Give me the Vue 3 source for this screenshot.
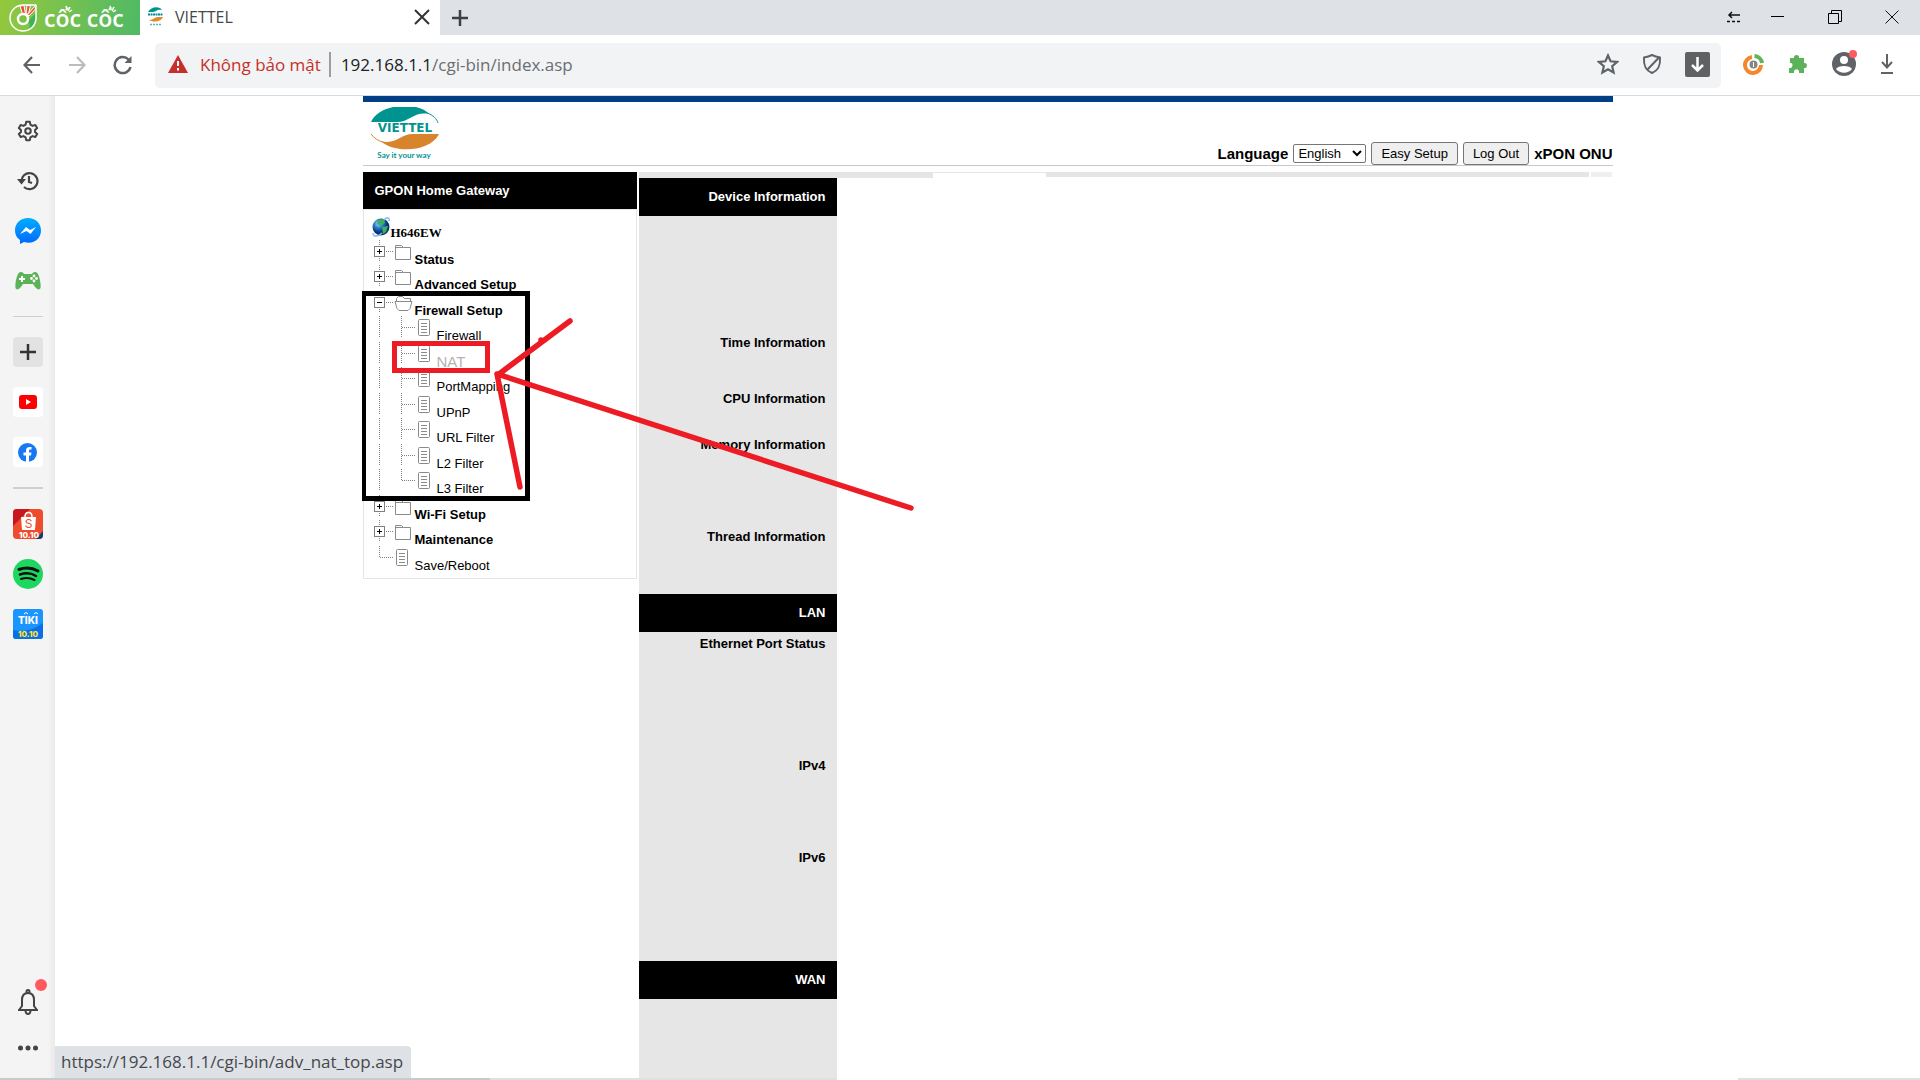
<script setup>
import { ref } from 'vue'

const language = ref('English')

const treeNodes = [
  { label: 'Status', type: 'folder', toggle: 'plus' },
  { label: 'Advanced Setup', type: 'folder', toggle: 'plus' },
  { label: 'Firewall Setup', type: 'open', toggle: 'minus' },
  { label: 'Firewall', type: 'page', child: true },
  { label: 'NAT', type: 'page', child: true, active: true },
  { label: 'PortMapping', type: 'page', child: true },
  { label: 'UPnP', type: 'page', child: true },
  { label: 'URL Filter', type: 'page', child: true },
  { label: 'L2 Filter', type: 'page', child: true },
  { label: 'L3 Filter', type: 'page', child: true, last: true },
  { label: 'Wi-Fi Setup', type: 'folder', toggle: 'plus' },
  { label: 'Maintenance', type: 'folder', toggle: 'plus' },
  { label: 'Save/Reboot', type: 'page', last: true }
]

const infoRows = [
  { label: 'Device Information', head: true },
  { label: '', height: 115 },
  { label: 'Time Information', height: 56 },
  { label: 'CPU Information', height: 46 },
  { label: 'Memory Information', height: 92 },
  { label: 'Thread Information', height: 69 },
  { label: 'LAN', head: true },
  { label: 'Ethernet Port Status', height: 122 },
  { label: 'IPv4', height: 92 },
  { label: 'IPv6', height: 115 },
  { label: 'WAN', head: true },
  { label: '', height: 115 }
]
</script>

<template>
  <div class="browser">
    <!-- Tab strip -->
    <header class="tab-strip">
      <button class="brand" aria-label="Cốc Cốc">
        <svg width="30" height="30" viewBox="0 0 30 30" fill="none">
          <path d="M27 3V15C27 21 24 26 18 28C22 24 21 20 19 18L27 10Z" fill="#3fb257" />
          <path d="M27 2H14A13 13 0 1 0 27 15Z" stroke="#fff" stroke-width="1.500" stroke-linejoin="round" />
          <path d="M11 3L15 2.500L16.500 11L13.500 11Z M18 2.500L21.500 2.500L19.500 11L17 11Z M26 3L26.500 6L20 13L18.500 11.500Z" fill="#f04e37" stroke="#fff" />
          <circle cx="14" cy="16" r="5" fill="#7bc143" stroke="#fff" stroke-width="2.500" />
        </svg>
        <span class="brand-name">cốc cốc</span>
        <svg class="brand-rays" width="80" height="8" viewBox="0 0 80 8" stroke="#fff" stroke-width="1.500">
          <path d="M23 1L24 5M27 2L25 6M29 5L26 7M67 1L68 5M71 2L69 6M73 5L70 7" />
        </svg>
      </button>
      <div class="tab">
        <svg width="17" height="20" viewBox="0 0 17 20">
          <path d="M1 5C4 -1 13 -1 15 3C9 2 10 5 6 5Z" fill="#009490" />
          <path d="M16 10C13 16 5 15 2 13C7 13 7 10 11 10Z" fill="#e08a2d" />
          <path d="M1 7.500H16" stroke="#008c9c" stroke-width="2" stroke-dasharray="2 .5" />
          <path d="M3 17.500H14" stroke="#5fb5b5" stroke-width="1.500" stroke-dasharray="2 1" />
        </svg>
        <span class="tab-title">VIETTEL</span>
        <button class="icon-btn" aria-label="Close tab">
          <svg width="16" height="16" viewBox="0 0 16 16" stroke="#333" stroke-width="2"><path d="M1 1L15 15M15 1L1 15" /></svg>
        </button>
      </div>
      <button class="icon-btn new-tab" aria-label="New tab">
        <svg width="16" height="16" viewBox="0 0 16 16" stroke="#3c4043" stroke-width="2.500"><path d="M8 0V16M0 8H16" /></svg>
      </button>
      <div class="window-buttons">
        <button class="icon-btn" aria-label="Compact">
          <svg width="14" height="12" viewBox="0 0 14 12" fill="none" stroke="#111" stroke-width="1.500">
            <path d="M2 4H13M5 1L2 4L5 7" /><path d="M0 10.500H13" stroke-dasharray="3 2" />
          </svg>
        </button>
        <button class="icon-btn" aria-label="Minimize">
          <svg width="14" height="14" viewBox="0 0 14 14"><rect y="6" width="13" height="1" /></svg>
        </button>
        <button class="icon-btn" aria-label="Restore">
          <svg width="14" height="14" viewBox="0 0 14 14" fill="none" stroke="#000"><path d="M.5 3.500H10.500V13.500H.5ZM3.500 3V.5H13.500V11.500H11" /></svg>
        </button>
        <button class="icon-btn" aria-label="Close">
          <svg width="14" height="14" viewBox="0 0 14 14" stroke="#111"><path d="M.5 .5L13.500 13.500M13.500 .5L.5 13.500" /></svg>
        </button>
      </div>
    </header>

    <!-- Toolbar -->
    <nav class="toolbar">
      <div class="nav-buttons">
        <button class="icon-btn" aria-label="Back">
          <svg width="18" height="18" viewBox="0 0 18 18" fill="none" stroke="#5f6368" stroke-width="2.200"><path d="M17 9H2M9 1L1.500 9L9 17" /></svg>
        </button>
        <button class="icon-btn" aria-label="Forward">
          <svg width="18" height="18" viewBox="0 0 18 18" fill="none" stroke="#babcbe" stroke-width="2.200"><path d="M1 9H16M9 1L16.500 9L9 17" /></svg>
        </button>
        <button class="icon-btn" aria-label="Reload">
          <svg width="20" height="20" viewBox="0 0 20 20" fill="none" stroke="#5f6368" stroke-width="2.500">
            <path d="M17.500 12A8 8 0 1 1 15.500 4.500L17 6" /><path d="M18.500 1V8H11.500Z" fill="#5f6368" stroke="none" />
          </svg>
        </button>
      </div>
      <div class="omnibox">
        <svg width="20" height="18" viewBox="0 0 20 18"><path d="M10 0L20 18H0Z" fill="#c5302a" /><path d="M10 6V11M10 13V15.500" stroke="#fff" stroke-width="2" /></svg>
        <span class="insecure">Không bảo mật</span>
        <span class="divider"></span>
        <span class="url">192.168.1.1<span class="path">/cgi-bin/index.asp</span></span>
        <div class="omni-icons">
          <button class="icon-btn" aria-label="Bookmark">
            <svg width="22" height="22" viewBox="0 0 22 22" fill="none" stroke="#5f6368" stroke-width="2.200"><path d="M11 2.500L13.600 8.300L20 9L15.200 13.200L16.600 19.500L11 16.200L5.400 19.500L6.800 13.200L2 9L8.400 8.300Z" /></svg>
          </button>
          <button class="icon-btn" aria-label="Protection">
            <svg width="20" height="22" viewBox="0 0 20 22" fill="none" stroke="#5f6368" stroke-width="2"><path d="M10 2C13 3.500 15 4 18 4.500C18.500 12 17 17 10 20C3 17 1.500 12 2 4.500C5 4 7 3.500 10 2ZM5 17L16.500 5" /></svg>
          </button>
          <button class="icon-btn" aria-label="Save media">
            <svg width="25" height="25" viewBox="0 0 25 25" fill="none"><rect width="25" height="25" rx="2" fill="#606163" /><path d="M12.500 5V18M7 13L12.500 18.500L18 13" stroke="#fff" stroke-width="2.500" /></svg>
          </button>
        </div>
      </div>
      <div class="extensions">
        <button class="icon-btn" aria-label="Savings">
          <svg width="21" height="21" viewBox="0 0 21 21" fill="none">
            <path d="M9 3A8 8 0 1 0 18 11" stroke="#f5862a" stroke-width="4" /><path d="M11.500 2A8 8 0 0 1 19 9" stroke="#5fb35a" stroke-width="4" />
            <circle cx="10.500" cy="10.500" r="4" fill="#858585" /><path d="M10.500 8V13" stroke="#fff" />
          </svg>
        </button>
        <button class="icon-btn" aria-label="Extensions">
          <svg width="20" height="20" viewBox="0 0 20 20" fill="#5cb25a"><path d="M2 4H6C5 0 12 0 11 4H16V9C20 8 20 15 16 14V19H11C12 14 5 14 6 19H1V14C5 15 6 8 2 9Z" /></svg>
        </button>
        <button class="icon-btn" aria-label="Profile">
          <svg width="24" height="24" viewBox="0 0 24 24"><circle cx="12" cy="12" r="12" fill="#5f6368" /><circle cx="12" cy="8" r="4" fill="#fff" /><path d="M4 17C6 13 18 13 20 17C16 22 8 22 4 17Z" fill="#fff" /></svg>
          <span class="dot"></span>
        </button>
        <button class="icon-btn" aria-label="Downloads">
          <svg width="14" height="20" viewBox="0 0 14 20" fill="none" stroke="#5f6368" stroke-width="2"><path d="M7 0V13M2 8L7 13.500L12 8M1 19H13" /></svg>
        </button>
      </div>
    </nav>

    <div class="body">
      <!-- Browser sidebar -->
      <aside class="sidebar">
        <button class="side-btn" aria-label="Settings">
          <svg width="22" height="22" viewBox="0 0 24 24" fill="none" stroke="#444" stroke-width="2.200" stroke-linejoin="round">
            <path d="M10 2H14L14.600 5L17 6.400L20 5.400L22 8.800L19.700 10.800V13.200L22 15.200L20 18.600L17 17.600L14.600 19L14 22H10L9.400 19L7 17.600L4 18.600L2 15.200L4.300 13.200V10.800L2 8.800L4 5.400L7 6.400L9.400 5Z" /><circle cx="12" cy="12" r="3" />
          </svg>
        </button>
        <button class="side-btn" aria-label="History">
          <svg width="22" height="20" viewBox="0 0 22 20" fill="none" stroke="#444" stroke-width="2.200"><path d="M4.500 11A8 8 0 1 1 7 16M12 5V11L15 12" /><path d="M0 8H9L4.500 13.500Z" fill="#444" stroke="none" /></svg>
        </button>
        <button class="side-btn" aria-label="Messenger">
          <svg width="26" height="26" viewBox="0 0 26 26">
            <defs><linearGradient id="msg" x2="0" y2="1"><stop stop-color="#00aeff" /><stop offset="1" stop-color="#0068ff" /></linearGradient></defs>
            <path d="M13 0C5.500 0 0 5 0 12.500C0 17 2 20 5 22V26L9 24C18 27 26 21 26 12.500C26 5 20.500 0 13 0Z" fill="url(#msg)" />
            <path d="M5 16L11 9L15 12L21 9L15.500 16L11.500 13Z" fill="#fff" />
          </svg>
        </button>
        <button class="side-btn" aria-label="Games">
          <svg width="26" height="18" viewBox="0 0 26 18"><path d="M3 2C5 -1 8 0 9 2H17C18 0 21 -1 23 2C25 6 26 12 25.500 16C24 19 21 17 18 12H8C5 17 2 19 .5 16C0 12 1 6 3 2Z" fill="#5cb256" /><path d="M4 7H10M7 4V10" stroke="#fff" stroke-width="2" /><g fill="#fff"><circle cx="19" cy="4" r="1.400" /><circle cx="19" cy="9" r="1.400" /><circle cx="16.500" cy="6.500" r="1.400" /><circle cx="21.500" cy="6.500" r="1.400" /></g></svg>
        </button>
        <hr class="side-line" />
        <button class="side-btn tile grey" aria-label="Add">
          <svg width="16" height="16" viewBox="0 0 16 16" stroke="#333" stroke-width="2.500"><path d="M8 0V16M0 8H16" /></svg>
        </button>
        <button class="side-btn tile" aria-label="YouTube">
          <svg width="18" height="14" viewBox="0 0 18 14"><rect width="18" height="14" rx="3" fill="#f00" /><path d="M7 4L12 7L7 10Z" fill="#fff" /></svg>
        </button>
        <button class="side-btn tile" aria-label="Facebook">
          <svg width="19" height="19" viewBox="0 0 19 19"><circle cx="9.500" cy="9.500" r="9.500" fill="#1877f2" /><path d="M8 19V12.500H5.500V9.500H8V7.500C8 4.500 10 3.500 13.500 4V6.500C11.500 6.500 11 6.800 11 8V9.500H13.500L13 12.500H11V19Z" fill="#fff" /></svg>
        </button>
        <hr class="side-line thick" />
        <button class="side-btn" aria-label="Shopee">
          <svg width="30" height="30" viewBox="0 0 30 30">
            <rect width="30" height="30" rx="4" fill="#ee4d2d" /><path d="M4 0H17L0 17V4Q0 0 4 0Z" fill="#c9151e" /><path d="M30 22V26Q30 30 26 30H23Z" fill="#173a7a" />
            <path d="M8 8H23L22 21H9Z" fill="#fff" /><path d="M12 8C12 2 19 2 19 8" fill="none" stroke="#fff" stroke-width="1.500" />
            <text x="15.500" y="19" class="badge-text" font-size="12" fill="#ee4d2d">S</text>
            <text x="16" y="29" class="badge-text heavy" font-size="8" fill="#fff">10.10</text>
          </svg>
        </button>
        <button class="side-btn" aria-label="Spotify">
          <svg width="30" height="30" viewBox="0 0 30 30" fill="none" stroke="#111" stroke-linecap="round"><circle cx="15" cy="15" r="15" fill="#1ed760" stroke="none" /><path d="M6 10.500Q16 7 25 12" stroke-width="3" /><path d="M7 15.500Q16 12.500 23 17" stroke-width="2.500" /><path d="M8 20Q15 17.500 21.500 21" stroke-width="2" /></svg>
        </button>
        <button class="side-btn" aria-label="Tiki">
          <svg width="30" height="30" viewBox="0 0 30 30">
            <rect width="30" height="30" rx="3" fill="#1a94ff" /><path d="M0 21Q15 25 30 14V27Q30 30 27 30H3Q0 30 0 27Z" fill="#0b6fe8" />
            <path d="M11 5Q13 2 15 5M21 5Q23 2 25 5" fill="none" stroke="#fff" />
            <text x="15" y="15" class="badge-text heavy" font-size="10" fill="#fff">TIKI</text>
            <text x="15" y="28" class="badge-text heavy" font-size="8" fill="#ffe926">10.10</text>
          </svg>
        </button>
        <div class="side-bottom">
          <button class="side-btn bell" aria-label="Notifications">
            <svg width="20" height="26" viewBox="0 0 20 26" fill="none" stroke="#444" stroke-width="2"><path d="M1 21H19L16 17V11C16 7 14 4 10 4C6 4 4 7 4 11V17ZM7.500 22C8 26 12 26 12.500 22" /><circle cx="10" cy="2.500" r="1.500" /></svg>
            <span class="dot"></span>
          </button>
          <button class="side-btn" aria-label="More">
            <svg width="20" height="6" viewBox="0 0 20 6" fill="#444"><circle cx="2.500" cy="3" r="2.500" /><circle cx="10" cy="3" r="2.500" /><circle cx="17.500" cy="3" r="2.500" /></svg>
          </button>
        </div>
      </aside>

      <!-- Router page -->
      <main class="page">
        <div class="gateway">
          <div class="gw-header">
            <svg width="70" height="58" viewBox="0 0 70 58">
              <path d="M1 15C10 -5 50 -5 59 7C44 4 40 15 27 15Z" fill="#009490" />
              <path d="M69 27C60 46 22 46 11 34C26 38 30 27 43 27Z" fill="#d8842c" />
              <path d="M57 6C63 8 67 12 68 16" fill="none" stroke="#009490" />
              <path d="M1 27C4 31 8 34 13 35" fill="none" stroke="#d8842c" />
              <text x="35" y="25" class="logo-name">VIETTEL</text>
              <text x="34" y="51" class="logo-tag">Say it your way</text>
            </svg>
            <div class="gw-controls">
              <label for="lang">Language</label>
              <select id="lang" v-model="language">
                <option>English</option>
              </select>
              <button class="gw-btn">Easy Setup</button>
              <button class="gw-btn">Log Out</button>
              <strong>xPON ONU</strong>
            </div>
          </div>

          <div class="gw-main">
            <section class="menu">
              <h1 class="menu-title">GPON Home Gateway</h1>
              <div class="menu-body">
                <div class="root">
                  <svg width="19" height="20" viewBox="0 0 19 20">
                    <defs><radialGradient id="globe" cx=".35" cy=".3"><stop stop-color="#a9dcff" /><stop offset=".5" stop-color="#2b82cf" /><stop offset="1" stop-color="#0b3474" /></radialGradient></defs>
                    <circle cx="9" cy="10" r="8.500" fill="url(#globe)" />
                    <path d="M6 3L12 2L13 6L9 9L5 7ZM10 10L16 9L14 15L11 17Z" fill="#3fae62" />
                    <path d="M1 16C1 21 7 19 10 16M12 3C15 0 18 0 17 4" fill="none" stroke="#7dbdf0" stroke-width="1.500" />
                  </svg>
                  <span>H646EW</span>
                </div>
                <ul class="tree">
                  <li v-for="node in treeNodes" :key="node.label" class="node">
                    <svg width="22" height="22" viewBox="0 0 22 22" fill="none" stroke="#808080">
                      <path v-if="node.child" d="M7.500 0V22" stroke-dasharray="1 1" />
                      <template v-else>
                        <path :d="node.last ? 'M7.500 0V11.500M8 11.500H21' : 'M7.500 0V22M14 11.500H21'" stroke-dasharray="1 1" />
                        <template v-if="node.toggle">
                          <rect x="2.500" y="6.500" width="10" height="10" fill="#fff" />
                          <path :d="node.toggle === 'plus' ? 'M5 11.500H10M7.500 9V14' : 'M5 11.500H10'" stroke="#000" />
                        </template>
                      </template>
                    </svg>
                    <svg v-if="node.child" width="22" height="22" viewBox="0 0 22 22" fill="none" stroke="#808080">
                      <path :d="node.last ? 'M7.500 0V11.500M8 11.500H21' : 'M7.500 0V22M8 11.500H21'" stroke-dasharray="1 1" />
                    </svg>
                    <svg :width="node.type === 'page' ? 18 : 20" height="22" :viewBox="node.type === 'page' ? '0 0 18 22' : '0 0 20 22'" fill="none" stroke="#8a8a8a">
                      <path v-if="node.type === 'folder'" d="M1.500 19.500V5.500H7.500L9.500 7.500H16.500V19.500ZM1.500 7.500H9" />
                      <path v-else-if="node.type === 'open'" d="M2.500 10V7.500L4.500 5.500H8.500L10.500 7.500H16.500V10M1 10.500H18L16 17.500L14 19.500H5L3 17.500Z" stroke-linejoin="round" />
                      <template v-else>
                        <rect x="2.500" y="3.500" width="11" height="16" rx="1" />
                        <path d="M5 7.500H11M5 10.500H11M5 13.500H11M5 16.500H11" />
                      </template>
                    </svg>
                    <a href="#" :class="{ bold: node.toggle, active: node.active, sub: node.type === 'page' }">{{ node.label }}</a>
                  </li>
                </ul>
              </div>
            </section>

            <section class="info">
              <div class="frame-top"><i></i><i></i><i></i><i></i></div>
              <table class="info-table">
                <tbody>
                  <tr v-for="(row, i) in infoRows" :key="i" :class="{ head: row.head }" :style="row.height ? { height: row.height + 'px' } : null">
                    <th scope="row">{{ row.label }}</th>
                  </tr>
                </tbody>
              </table>
            </section>
          </div>

          <!-- Hand-drawn marks over the menu -->
          <svg class="marks" width="560" height="420" viewBox="0 0 560 420" fill="none" stroke="#ed1c24" stroke-width="5" stroke-linecap="round">
            <rect x="1.500" y="197.500" width="164" height="205" stroke="#000" stroke-linecap="butt" />
            <rect x="32.500" y="247.500" width="93" height="27" />
            <path d="M208 225L137 278M135 278L158 391M135 278L549 412M179 244V246" stroke-width="5.500" />
          </svg>
        </div>
        <div class="status-bubble">https://192.168.1.1/cgi-bin/adv_nat_top.asp</div>
      </main>
    </div>
    <footer class="edge"><i></i><i></i><i></i><i></i></footer>
  </div>
</template>

<style>
body {
  margin: 0;
  overflow: hidden;
}
</style>

<style scoped>
.browser {
  display: flex;
  flex-direction: column;
  height: 100vh;
  background: #fff;
  font-family: "Open Sans", "Noto Sans", sans-serif;
}

button {
  border: none;
  background: none;
  padding: 0;
  font: inherit;
}

svg {
  display: block;
  flex-shrink: 0;
}

.icon-btn {
  position: relative;
  display: flex;
  align-items: center;
  justify-content: center;
}

.tab-strip {
  display: flex;
  height: 35px;
  background: #dee1e6;
}

.brand {
  position: relative;
  display: flex;
  align-items: center;
  gap: 5px;
  width: 140px;
  padding-left: 9px;
  background: linear-gradient(100deg, #94c83d, #4fb966);
  color: #fff;
}

.brand-name {
  font-size: 23px;
  font-weight: 600;
  line-height: 30px;
}

.brand-rays {
  position: absolute;
  left: 43px;
  top: 5px;
}

.tab {
  display: flex;
  align-items: center;
  width: 285px;
  box-sizing: border-box;
  padding: 0 10px 2px 7px;
  background: #fff;
}

.tab {
  width: 300px;
}

.tab-title {
  flex: 1;
  padding-left: 11px;
  color: #45474a;
  font-size: 16px;
}

.new-tab {
  width: 40px;
}

.window-buttons {
  display: flex;
  margin-left: auto;
}

.window-buttons .icon-btn {
  width: 57px;
  height: 33px;
}

.window-buttons .icon-btn:first-child {
  width: 30px;
}

.toolbar {
  display: flex;
  align-items: center;
  height: 60px;
  border-bottom: 1px solid #d9dadc;
}

.nav-buttons {
  display: flex;
  align-items: center;
  gap: 27px;
  width: 132px;
  padding-left: 23px;
}

.omnibox {
  flex: 1;
  display: flex;
  align-items: center;
  box-sizing: border-box;
  height: 45px;
  padding: 0 11px 2px 13px;
  border-radius: 5px;
  background: #f1f3f4;
  font-size: 17px;
}

.insecure {
  padding: 0 8px 0 12px;
  color: #c5302a;
}

.divider {
  width: 2px;
  height: 25px;
  background: #9a9da1;
}

.url {
  padding-left: 10px;
  color: #202124;
}

.path {
  color: #6a6e73;
}

.omni-icons {
  display: flex;
  align-items: center;
  gap: 23px;
  margin-left: auto;
}

.extensions {
  display: flex;
  align-items: center;
  gap: 24px;
  padding: 0 26px 2px 22px;
}

.dot {
  position: absolute;
  top: -2px;
  right: -1px;
  width: 8px;
  height: 8px;
  border-radius: 50%;
  background: #ff5a5f;
}

.body {
  flex: 1;
  display: flex;
  min-height: 0;
}

.sidebar {
  display: flex;
  flex-direction: column;
  align-items: center;
  gap: 20px;
  box-sizing: border-box;
  width: 55px;
  padding-top: 20px;
  background: linear-gradient(90deg, #f4f4f4 48px, #e9e9e9 55px);
}

.side-btn {
  position: relative;
  display: flex;
  flex-shrink: 0;
  align-items: center;
  justify-content: center;
  width: 30px;
  height: 30px;
}

.tile {
  border-radius: 4px;
  background: #fff;
}

.grey {
  background: #e2e2e2;
}

.side-line {
  width: 30px;
  height: 1px;
  margin: 0;
  border: none;
  background: #cfcfcf;
}

.thick {
  height: 2px;
}

.badge-text {
  text-anchor: middle;
  font-family: Inter, sans-serif;
  stroke: none;
}

.heavy {
  font-weight: 800;
}

.side-bottom {
  display: flex;
  flex-direction: column;
  gap: 16px;
  margin-top: auto;
  padding-bottom: 15px;
}

.bell .dot {
  top: -8px;
  right: -4px;
  width: 12px;
  height: 12px;
}

.page {
  position: relative;
  flex: 1;
  min-width: 0;
  overflow: hidden;
}

.gateway {
  position: relative;
  max-width: 1250px;
  margin: 0 auto;
  border-top: 6px solid #003f85;
  color: #000;
  font-family: Arial, "Liberation Sans", sans-serif;
  font-size: 13px;
}

.gw-header {
  display: flex;
  justify-content: space-between;
  align-items: flex-end;
  height: 63px;
  padding-left: 7px;
  border-bottom: 1px solid #c8c8c8;
}

.gw-controls {
  display: flex;
  align-items: center;
  gap: 5px;
  font-size: 15px;
  font-weight: bold;
}

.gw-controls select {
  width: 73px;
  height: 19px;
  padding: 0;
  border: 1px solid #767676;
  border-radius: 2px;
  background: #fff;
  color: #000;
  font-family: inherit;
  font-size: 13px;
}

.gw-btn {
  height: 23px;
  padding: 0 9px;
  border: 1px solid #767676;
  border-radius: 3px;
  background: #efefef;
  font-size: 13px;
  font-weight: normal;
}

.logo-name {
  fill: #009490;
  font-family: "DejaVu Sans", sans-serif;
  font-size: 12px;
  font-weight: bold;
  text-anchor: middle;
}

.logo-tag {
  fill: #009490;
  font-family: Lato, sans-serif;
  font-size: 8px;
  font-weight: bold;
  text-anchor: middle;
}

.gw-main {
  display: flex;
  align-items: flex-start;
  gap: 2px;
  padding-top: 6px;
}

.menu {
  width: 274px;
}

.menu-title {
  margin: 0;
  padding-left: 12px;
  background: #000;
  color: #fff;
  font-size: 13px;
  line-height: 37px;
}

.menu-body {
  padding: 7px 8px;
  border: 1px solid #e5e5e5;
}

.root {
  display: flex;
  align-items: flex-end;
  height: 23px;
  font-family: "Times New Roman", "Liberation Serif", serif;
  font-weight: bold;
  line-height: 15px;
}

.root svg {
  align-self: flex-start;
}

.tree {
  display: grid;
  grid-auto-rows: 1fr;
  height: 331px;
  margin: 0;
  padding: 0;
  list-style: none;
}

.node {
  display: flex;
  min-height: 0;
}

.node a {
  padding: 12px 0 0 1px;
  color: #000;
  line-height: 15px;
  text-decoration: none;
  white-space: nowrap;
}

.node a.sub {
  padding-left: 3px;
}

.node a.bold {
  font-weight: bold;
}

.node a.active {
  color: #b9b1b1;
  font-size: 15px;
}

.info {
  flex: 1;
}

.frame-top {
  display: flex;
  height: 6px;
}

.frame-top i {
  background: #e5e5e5;
}

.frame-top i:nth-child(1) {
  flex: 294;
}

.frame-top i:nth-child(2) {
  flex: 113;
  height: 1px;
}

.frame-top i:nth-child(3) {
  flex: 543;
  height: 5px;
}

.frame-top i:nth-child(4) {
  flex: 21;
  height: 5px;
  margin-left: 2px;
  background: #efefef;
}

.info-table {
  width: 198px;
  border-collapse: collapse;
  background: #e6e6e6;
}

.info-table th {
  padding: 4px 11px 0 0;
  text-align: right;
  vertical-align: top;
  line-height: 15px;
}

.info-table .head {
  height: 38px;
  background: #000;
  color: #fff;
}

.info-table .head th {
  padding: 0 11px 2px 0;
  vertical-align: middle;
}

.marks {
  position: absolute;
  top: -6px;
  left: -1px;
  pointer-events: none;
}

.status-bubble {
  position: absolute;
  left: 0;
  bottom: 0;
  padding: 0 8px 0 6px;
  border-radius: 0 4px 0 0;
  background: #dee1e6;
  color: #45484c;
  font-size: 17px;
  line-height: 32px;
}

.edge {
  display: flex;
  height: 2px;
  background: #fff;
}

.edge i:nth-child(1) {
  width: 490px;
  background: #c9c9c9;
}

.edge i:nth-child(2) {
  width: 347px;
  background: #e0e0e0;
}

.edge i:nth-child(3) {
  flex: 1;
}

.edge i:nth-child(4) {
  width: 182px;
  background: #e0e0e0;
}
</style>
